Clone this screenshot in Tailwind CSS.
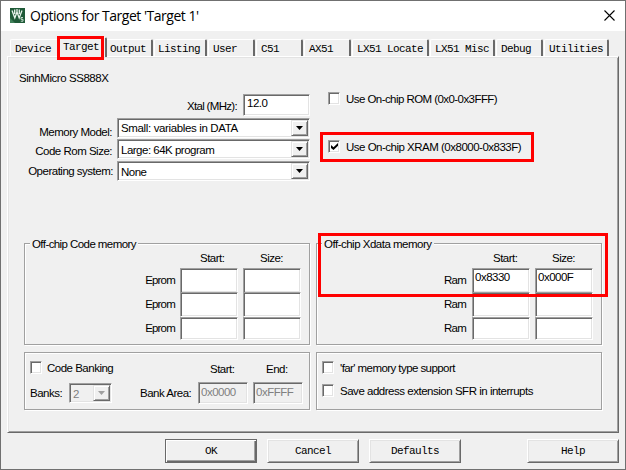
<!DOCTYPE html>
<html lang="en">
<head>
<meta charset="utf-8">
<title>Options for Target 'Target 1'</title>
<script src="https://cdn.jsdelivr.net/npm/@tailwindcss/browser@4"></script>
</head>
<body class="overflow-hidden">
<div class="relative w-[626px] h-[470px] border border-[#707070] bg-[#f0f0f0] text-black font-['Liberation_Sans',Arial,sans-serif] text-[11.5px] leading-[14px] tracking-[-0.5px] whitespace-nowrap overflow-hidden">

  <!-- Title bar -->
  <header class="h-[30px] bg-white flex items-center pl-[9px] pr-[10px]">
    <svg class="w-[15px] h-[15px] shrink-0 -mt-px" viewBox="0 0 15 15">
      <rect width="15" height="15" fill="#1f5a38"/>
      <path d="M0 10L5 15H0z" fill="#3f8059"/>
      <path d="M2 2.5L4.8 10L7 4L9.2 10L12 2.5M4.7 1.5V6M7 1V5M9.3 1.5V6" fill="none" stroke="#e8f3ec" stroke-width="1.3"/>
      <path d="M13 9.5H11V11.3H13V13.2H10.8" fill="none" stroke="#d5e8dc" stroke-width=".9"/>
    </svg>
    <h1 class="ml-[5px] font-['Open_Sans','Noto_Sans',sans-serif] text-[14px] leading-[20px] tracking-[-0.48px]">Options for Target 'Target 1'</h1>
    <svg class="ml-auto -mt-px w-[11px] h-[11px]" viewBox="0 0 11 11"><path d="M.5.5l10 10M10.5.5l-10 10" stroke="#000" stroke-width="1.1"/></svg>
  </header>

  <!-- Tabs -->
  <nav class="h-[25px] pl-[9px] flex items-end font-['Liberation_Mono',monospace] text-[11px] leading-[18px] tracking-[-0.6px]">
    <div class="w-[47px] h-[17px] pl-[4px] border-t border-l border-white rounded-tl-[2px]">Device</div>
    <div class="relative w-[50px] h-[20px] -mb-px pl-[5px] border-t border-l border-white border-r-2 border-r-[#696969] bg-[#f0f0f0] rounded-t-[2px]">Target</div>
    <div class="w-[46px] h-[17px] pl-[3px] border-t border-white border-r-2 border-r-[#696969] rounded-tr-[2px]">Output</div>
    <div class="ml-px w-[53px] h-[17px] pl-[3px] border-t border-l border-white border-r-2 border-r-[#696969] rounded-t-[2px]">Listing</div>
    <div class="ml-px w-[47px] h-[17px] pl-[4px] border-t border-l border-white border-r-2 border-r-[#696969] rounded-t-[2px]">User</div>
    <div class="ml-px w-[47px] h-[17px] pl-[4px] border-t border-l border-white border-r-2 border-r-[#696969] rounded-t-[2px]">C51</div>
    <div class="ml-px w-[47px] h-[17px] pl-[4px] border-t border-l border-white border-r-2 border-r-[#696969] rounded-t-[2px]">AX51</div>
    <div class="ml-px w-[77px] h-[17px] pl-[4px] border-t border-l border-white border-r-2 border-r-[#696969] rounded-t-[2px]">LX51 Locate</div>
    <div class="ml-px w-[65px] h-[17px] pl-[4px] border-t border-l border-white border-r-2 border-r-[#696969] rounded-t-[2px]">LX51 Misc</div>
    <div class="ml-px w-[47px] h-[17px] pl-[4px] border-t border-l border-white border-r-2 border-r-[#696969] rounded-t-[2px]">Debug</div>
    <div class="ml-px w-[65px] h-[17px] pl-[4px] border-t border-l border-white border-r-2 border-r-[#696969] rounded-t-[2px]">Utilities</div>
  </nav>

  <!-- Tab page -->
  <main class="ml-[6px] w-[612px] h-[377px] border border-t-white border-l-white border-r-[#696969] border-b-[#696969] shadow-[inset_1px_1px_0_#e3e3e3,inset_-1px_-1px_0_#a0a0a0]">
    <section class="h-[186px] flex">
      <div class="w-[302px] shrink-0">
        <p class="mt-[14px] ml-[11px] h-[14px] tracking-[-0.44px]">SinhMicro SS888X</p>
        <div class="mt-[9px] h-[22px] flex justify-end gap-[6px]">
          <label class="leading-[25px] tracking-[-0.68px]">Xtal (MHz):</label>
          <div class="w-[67px] pl-[2px] leading-[17px] bg-white border border-t-[#a0a0a0] border-l-[#a0a0a0] border-r-white border-b-white shadow-[inset_1px_1px_0_#696969,inset_-1px_-1px_0_#e3e3e3]"><span class="pl-px">12.0</span></div>
        </div>
        <div class="mt-[2px] h-[20px] flex justify-end gap-[5px]">
          <label class="leading-[28px]">Memory Model:</label>
          <div class="w-[193px] flex justify-between pl-[3px] pr-px py-px leading-[17px] tracking-[-0.36px] bg-white border border-t-[#a0a0a0] border-l-[#a0a0a0] border-r-white border-b-white shadow-[inset_1px_1px_0_#696969,inset_-1px_-1px_0_#e3e3e3]">Small: variables in DATA
            <span class="w-[17px] h-[16px] flex items-center justify-center bg-[#f0f0f0] border border-t-[#e3e3e3] border-l-[#e3e3e3] border-r-[#696969] border-b-[#696969] shadow-[inset_1px_1px_0_#fff,inset_-1px_-1px_0_#a0a0a0]"><svg class="w-[7px] h-[4px]" viewBox="0 0 7 4"><path d="M0 0h7L3.5 4z"/></svg></span>
          </div>
        </div>
        <div class="mt-[1px] h-[20px] flex justify-end gap-[5px]">
          <label class="leading-[24px]">Code Rom Size:</label>
          <div class="w-[193px] flex justify-between pl-[3px] pr-px py-px leading-[18px] bg-white border border-t-[#a0a0a0] border-l-[#a0a0a0] border-r-white border-b-white shadow-[inset_1px_1px_0_#696969,inset_-1px_-1px_0_#e3e3e3]">Large: 64K program
            <span class="w-[17px] h-[16px] flex items-center justify-center bg-[#f0f0f0] border border-t-[#e3e3e3] border-l-[#e3e3e3] border-r-[#696969] border-b-[#696969] shadow-[inset_1px_1px_0_#fff,inset_-1px_-1px_0_#a0a0a0]"><svg class="w-[7px] h-[4px]" viewBox="0 0 7 4"><path d="M0 0h7L3.5 4z"/></svg></span>
          </div>
        </div>
        <div class="mt-[2px] h-[20px] flex justify-end gap-[4px]">
          <label class="leading-[21px]">Operating system:</label>
          <div class="w-[193px] flex justify-between pl-[3px] pr-px py-px leading-[18px] bg-white border border-t-[#a0a0a0] border-l-[#a0a0a0] border-r-white border-b-white shadow-[inset_1px_1px_0_#696969,inset_-1px_-1px_0_#e3e3e3]">None
            <span class="w-[17px] h-[16px] flex items-center justify-center bg-[#f0f0f0] border border-t-[#e3e3e3] border-l-[#e3e3e3] border-r-[#696969] border-b-[#696969] shadow-[inset_1px_1px_0_#fff,inset_-1px_-1px_0_#a0a0a0]"><svg class="w-[7px] h-[4px]" viewBox="0 0 7 4"><path d="M0 0h7L3.5 4z"/></svg></span>
          </div>
        </div>
      </div>
      <div class="pl-[18px] pt-[35px]">
        <div class="flex items-center gap-[6px] h-[13px]">
          <span class="w-[12px] h-[13px] bg-white border border-t-[#a0a0a0] border-l-[#a0a0a0] border-r-white border-b-white shadow-[inset_1px_1px_0_#696969,inset_-1px_-1px_0_#e3e3e3]"></span>
          <span class="tracking-[-0.56px]">Use On-chip ROM (0x0-0x3FFF)</span>
        </div>
        <div class="mt-[35px] flex items-center gap-[6px] h-[13px]">
          <span class="w-[12px] h-[13px] flex items-center justify-center bg-white border border-t-[#a0a0a0] border-l-[#a0a0a0] border-r-white border-b-white shadow-[inset_1px_1px_0_#696969,inset_-1px_-1px_0_#e3e3e3]"><svg class="w-[7px] h-[7px]" viewBox="0 0 7 7"><path d="M0 2v3l2.5 2L7 2.800V0L2.500 4.200z"/></svg></span>
          <span>Use On-chip XRAM (0x8000-0x833F)</span>
        </div>
      </div>
    </section>

    <!-- Memory groups -->
    <section class="ml-[16px] flex gap-[6px]">
      <div class="w-[286px] h-[102px] pr-[8px] border border-[#a0a0a0] shadow-[1px_1px_0_#fff,inset_1px_1px_0_#fff]">
        <h2 class="-mt-[7px] ml-[5px] px-[2px] h-[14px] w-fit bg-[#f0f0f0] tracking-[-0.58px]">Off-chip Code memory</h2>
        <div class="grid grid-cols-[1fr_58px_58px] gap-x-[5px] h-[17px]"><span></span><span class="pl-[20px]">Start:</span><span class="pl-[17px]">Size:</span></div>
        <div class="grid grid-cols-[1fr_58px_58px] gap-x-[5px] h-[22px]">
          <span class="text-right leading-[25px] tracking-[-0.8px]">Eprom</span>
          <span class="bg-white border border-t-[#a0a0a0] border-l-[#a0a0a0] border-r-white border-b-white shadow-[inset_1px_1px_0_#696969,inset_-1px_-1px_0_#e3e3e3]"></span>
          <span class="bg-white border border-t-[#a0a0a0] border-l-[#a0a0a0] border-r-white border-b-white shadow-[inset_1px_1px_0_#696969,inset_-1px_-1px_0_#e3e3e3]"></span>
        </div>
        <div class="mt-[2px] grid grid-cols-[1fr_58px_58px] gap-x-[5px] h-[22px]">
          <span class="text-right leading-[25px] tracking-[-0.8px]">Eprom</span>
          <span class="bg-white border border-t-[#a0a0a0] border-l-[#a0a0a0] border-r-white border-b-white shadow-[inset_1px_1px_0_#696969,inset_-1px_-1px_0_#e3e3e3]"></span>
          <span class="bg-white border border-t-[#a0a0a0] border-l-[#a0a0a0] border-r-white border-b-white shadow-[inset_1px_1px_0_#696969,inset_-1px_-1px_0_#e3e3e3]"></span>
        </div>
        <div class="mt-[3px] grid grid-cols-[1fr_58px_58px] gap-x-[5px] h-[22px]">
          <span class="text-right leading-[23px] tracking-[-0.8px]">Eprom</span>
          <span class="bg-white border border-t-[#a0a0a0] border-l-[#a0a0a0] border-r-white border-b-white shadow-[inset_1px_1px_0_#696969,inset_-1px_-1px_0_#e3e3e3]"></span>
          <span class="bg-white border border-t-[#a0a0a0] border-l-[#a0a0a0] border-r-white border-b-white shadow-[inset_1px_1px_0_#696969,inset_-1px_-1px_0_#e3e3e3]"></span>
        </div>
      </div>
      <div class="w-[286px] h-[102px] pr-[8px] border border-[#a0a0a0] shadow-[1px_1px_0_#fff,inset_1px_1px_0_#fff]">
        <h2 class="-mt-[7px] ml-[5px] px-[2px] h-[14px] w-fit bg-[#f0f0f0]">Off-chip Xdata memory</h2>
        <div class="grid grid-cols-[1fr_58px_58px] gap-x-[5px] h-[17px]"><span></span><span class="pl-[21px]">Start:</span><span class="pl-[17px]">Size:</span></div>
        <div class="grid grid-cols-[1fr_58px_58px] gap-x-[5px] h-[22px]">
          <span class="pr-[1px] text-right leading-[25px] tracking-[-0.8px]">Ram</span>
          <span class="pl-[2px] leading-[17px] bg-white border border-t-[#a0a0a0] border-l-[#a0a0a0] border-r-white border-b-white shadow-[inset_1px_1px_0_#696969,inset_-1px_-1px_0_#e3e3e3]">0x8330</span>
          <span class="pl-[2px] leading-[17px] bg-white border border-t-[#a0a0a0] border-l-[#a0a0a0] border-r-white border-b-white shadow-[inset_1px_1px_0_#696969,inset_-1px_-1px_0_#e3e3e3]">0x000F</span>
        </div>
        <div class="mt-[2px] grid grid-cols-[1fr_58px_58px] gap-x-[5px] h-[22px]">
          <span class="pr-[1px] text-right leading-[25px] tracking-[-0.8px]">Ram</span>
          <span class="bg-white border border-t-[#a0a0a0] border-l-[#a0a0a0] border-r-white border-b-white shadow-[inset_1px_1px_0_#696969,inset_-1px_-1px_0_#e3e3e3]"></span>
          <span class="bg-white border border-t-[#a0a0a0] border-l-[#a0a0a0] border-r-white border-b-white shadow-[inset_1px_1px_0_#696969,inset_-1px_-1px_0_#e3e3e3]"></span>
        </div>
        <div class="mt-[3px] grid grid-cols-[1fr_58px_58px] gap-x-[5px] h-[22px]">
          <span class="pr-[1px] text-right leading-[23px] tracking-[-0.8px]">Ram</span>
          <span class="bg-white border border-t-[#a0a0a0] border-l-[#a0a0a0] border-r-white border-b-white shadow-[inset_1px_1px_0_#696969,inset_-1px_-1px_0_#e3e3e3]"></span>
          <span class="bg-white border border-t-[#a0a0a0] border-l-[#a0a0a0] border-r-white border-b-white shadow-[inset_1px_1px_0_#696969,inset_-1px_-1px_0_#e3e3e3]"></span>
        </div>
      </div>
    </section>

    <!-- Banking and interrupt groups -->
    <section class="mt-[7px] ml-[16px] flex gap-[6px]">
      <div class="w-[286px] h-[58px] flex justify-between pl-[5px] pr-[6px] border border-[#a0a0a0] shadow-[1px_1px_0_#fff,inset_1px_1px_0_#fff]">
        <div class="pt-[8px]">
          <div class="flex items-center gap-[5px] h-[13px]">
            <span class="w-[12px] h-[13px] bg-white border border-t-[#a0a0a0] border-l-[#a0a0a0] border-r-white border-b-white shadow-[inset_1px_1px_0_#696969,inset_-1px_-1px_0_#e3e3e3]"></span>
            <span>Code Banking</span>
          </div>
          <div class="mt-[9px] h-[20px] flex">
            <span class="w-[39px] leading-[20px]">Banks:</span>
            <div class="w-[43px] flex justify-between pl-[3px] pr-px py-px leading-[18px] text-[#808080] border border-t-[#a0a0a0] border-l-[#a0a0a0] border-r-white border-b-white shadow-[inset_1px_1px_0_#696969,inset_-1px_-1px_0_#e3e3e3]">2
              <span class="w-[17px] h-[16px] flex items-center justify-center bg-[#f0f0f0] border border-t-[#e3e3e3] border-l-[#e3e3e3] border-r-[#696969] border-b-[#696969] shadow-[inset_1px_1px_0_#fff,inset_-1px_-1px_0_#a0a0a0]"><svg class="w-[7px] h-[4px]" viewBox="0 0 7 4"><path d="M0 0h7L3.5 4z" fill="#a0a0a0"/></svg></span>
            </div>
          </div>
        </div>
        <div class="pt-[9px]">
          <div class="grid grid-cols-[53px_50px_50px] gap-x-[5px] h-[20px]"><span></span><span class="pl-[12px]">Start:</span><span class="pl-[13px]">End:</span></div>
          <div class="grid grid-cols-[53px_50px_50px] gap-x-[5px] h-[22px]">
            <span class="leading-[22px]">Bank Area:</span>
            <span class="pl-[2px] leading-[18px] text-[#808080] border border-t-[#a0a0a0] border-l-[#a0a0a0] border-r-white border-b-white shadow-[inset_1px_1px_0_#696969,inset_-1px_-1px_0_#e3e3e3]">0x0000</span>
            <span class="pl-[2px] leading-[18px] text-[#808080] border border-t-[#a0a0a0] border-l-[#a0a0a0] border-r-white border-b-white shadow-[inset_1px_1px_0_#696969,inset_-1px_-1px_0_#e3e3e3]">0xFFFF</span>
          </div>
        </div>
      </div>
      <div class="w-[286px] h-[58px] pl-[5px] pt-[8px] border border-[#a0a0a0] shadow-[1px_1px_0_#fff,inset_1px_1px_0_#fff]">
        <div class="flex items-center gap-[6px] h-[13px]">
          <span class="w-[12px] h-[13px] bg-white border border-t-[#a0a0a0] border-l-[#a0a0a0] border-r-white border-b-white shadow-[inset_1px_1px_0_#696969,inset_-1px_-1px_0_#e3e3e3]"></span>
          <span class="tracking-[-0.57px]">'far' memory type support</span>
        </div>
        <div class="mt-[10px] flex items-center gap-[6px] h-[13px]">
          <span class="w-[12px] h-[13px] bg-white border border-t-[#a0a0a0] border-l-[#a0a0a0] border-r-white border-b-white shadow-[inset_1px_1px_0_#696969,inset_-1px_-1px_0_#e3e3e3]"></span>
          <span class="tracking-[-0.48px]">Save address extension SFR in interrupts</span>
        </div>
      </div>
    </section>
  </main>

  <!-- Dialog buttons -->
  <footer class="mt-[6px] pl-[164px] pr-[6px] flex gap-[10px] font-['Liberation_Mono',monospace] text-[11px] leading-[22px] tracking-[-0.6px] text-center">
    <button class="w-[92px] h-[24px] border border-[#696969] shadow-[inset_1px_1px_0_#fff,inset_-1px_-1px_0_#696969,inset_-2px_-2px_0_#a0a0a0]">OK</button>
    <button class="w-[92px] h-[24px] border border-t-white border-l-white border-r-[#696969] border-b-[#696969] shadow-[inset_1px_1px_0_#e3e3e3,inset_-1px_-1px_0_#a0a0a0]">Cancel</button>
    <button class="w-[92px] h-[24px] border border-t-white border-l-white border-r-[#696969] border-b-[#696969] shadow-[inset_1px_1px_0_#e3e3e3,inset_-1px_-1px_0_#a0a0a0]">Defaults</button>
    <button class="ml-auto w-[92px] h-[24px] border border-t-white border-l-white border-r-[#696969] border-b-[#696969] shadow-[inset_1px_1px_0_#e3e3e3,inset_-1px_-1px_0_#a0a0a0]">Help</button>
  </footer>

  <!-- Highlight frames -->
  <div class="absolute left-[56px] top-[35px] w-[47px] h-[24px] border-3 border-[#f00]"></div>
  <div class="absolute left-[319px] top-[131px] w-[214px] h-[30px] border-3 border-[#f00]"></div>
  <div class="absolute left-[317px] top-[232px] w-[290px] h-[64px] border-3 border-[#f00]"></div>
</div>
</body>
</html>
